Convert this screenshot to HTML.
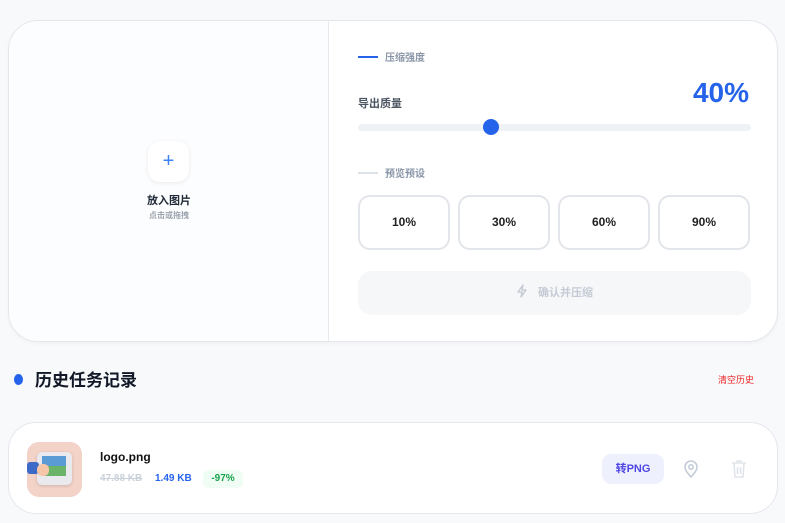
<!DOCTYPE html>
<html><head><meta charset="utf-8"><style>
*{box-sizing:border-box;margin:0;padding:0}
body{width:785px;height:523px;background:#f8f9fb;font-family:"Liberation Sans","Noto Sans CJK SC",sans-serif;position:relative;overflow:hidden}
.card{position:absolute;left:8px;top:20px;width:770px;height:322px;background:#fff;border:1px solid #e4e7ec;border-radius:30px;overflow:hidden;box-shadow:0 2px 4px rgba(0,0,0,.03)}
.left{position:absolute;left:0;top:0;width:320px;height:100%;background:#fcfdfe;border-right:1px solid #e6e9ee}
.plus{position:absolute;left:139px;top:120px;width:41px;height:41px;background:#fff;border-radius:12px;box-shadow:0 1px 4px rgba(0,0,0,.08);color:#3b82f6;font-size:20px;text-align:center;line-height:40px}
.t1{position:absolute;left:0;width:320px;text-align:center;top:171px;font-size:11px;font-weight:bold;color:#1f2937}
.t2{position:absolute;left:0;width:320px;text-align:center;top:189px;font-size:8px;color:#9ca3af;font-weight:bold}
.lbl{position:absolute;font-size:10px;color:#8a96a8;font-weight:bold}
.line{position:absolute;height:2px;width:20px}
.btn{position:absolute;top:174px;width:92px;height:55px;border:2px solid #e2e5ea;border-radius:12px;text-align:center;line-height:51px;font-size:12px;color:#222;font-weight:600}
</style></head><body>
<div class="card">
 <div class="left">
  <div class="plus">+</div>
  <div class="t1">放入图片</div>
  <div class="t2">点击或拖拽</div>
 </div>
 <div class="line" style="left:349px;top:35px;background:#2563eb"></div>
 <div class="lbl" style="left:376px;top:28px">压缩强度</div>
 <div style="position:absolute;left:349px;top:74px;font-size:11px;color:#4b5563;font-weight:bold">导出质量</div>
 <div style="position:absolute;right:28px;top:56px;font-size:28px;font-weight:bold;color:#2563eb">40%</div>
 <div style="position:absolute;left:349px;top:103px;width:393px;height:7px;border-radius:4px;background:#eef1f6"></div>
 <div style="position:absolute;left:474px;top:98px;width:16px;height:16px;border-radius:50%;background:#2563eb"></div>
 <div class="line" style="left:349px;top:151px;background:#dde2ea"></div>
 <div class="lbl" style="left:376px;top:144px">预览预设</div>
 <div class="btn" style="left:349px">10%</div>
 <div class="btn" style="left:449px">30%</div>
 <div class="btn" style="left:549px">60%</div>
 <div class="btn" style="left:649px">90%</div>
 <div style="position:absolute;left:349px;top:250px;width:393px;height:44px;background:#f6f7f9;border-radius:14px;text-align:center;line-height:44px;font-size:11px;color:#c5cbd5;font-weight:bold">
  <svg width="12" height="14" viewBox="0 0 12 14" style="vertical-align:-2px;margin-right:10px"><path d="M7 1L2 8h4l-1 5 5-7H6z" fill="none" stroke="#c5cbd5" stroke-width="1.4" stroke-linejoin="round"/></svg>确认并压缩</div>
</div>
<div style="position:absolute;left:14px;top:374px;width:9px;height:11px;border-radius:50%;background:#2563eb"></div>
<div style="position:absolute;left:35px;top:366px;font-size:17px;font-weight:bold;color:#111827">历史任务记录</div>
<div style="position:absolute;left:718px;top:373px;font-size:9px;color:#ef2020">清空历史</div>
<div style="position:absolute;left:8px;top:422px;width:770px;height:92px;background:#fff;border:1px solid #e4e7ec;border-radius:28px">
 <div style="position:absolute;left:18px;top:19px;width:55px;height:55px;border-radius:12px;background:#f3d2c8;overflow:hidden">
  <div style="position:absolute;left:10px;top:10px;width:35px;height:33px;border-radius:5px;background:#e9e9ee;box-shadow:0 1px 3px rgba(0,0,0,.15)"></div>
  <div style="position:absolute;left:15px;top:14px;width:24px;height:20px;background:linear-gradient(#5b9bd5 50%,#6cb36a 50%)"></div>
  <div style="position:absolute;left:0;top:20px;width:12px;height:12px;background:#3e6ac7;border-radius:3px"></div>
  <div style="position:absolute;left:10px;top:22px;width:12px;height:12px;background:#f5c6a8;border-radius:5px"></div>
 </div>
 <div style="position:absolute;left:91px;top:27px;font-size:12px;font-weight:bold;color:#111">logo.png</div>
 <div style="position:absolute;left:91px;top:50px;font-size:10px;font-weight:bold;color:#cbd2dc;text-decoration:line-through">47.88 KB</div>
 <div style="position:absolute;left:146px;top:50px;font-size:10px;font-weight:bold;color:#2563eb">1.49 KB</div>
 <div style="position:absolute;left:194px;top:47px;width:40px;height:18px;border-radius:6px;background:#f0fdf4;color:#16a34a;font-size:10px;font-weight:bold;text-align:center;line-height:18px">-97%</div>
 <div style="position:absolute;left:593px;top:31px;width:62px;height:30px;border-radius:9px;background:#eef1fd;color:#4f46e5;font-size:11px;font-weight:bold;text-align:center;line-height:30px">转PNG</div>
 <svg style="position:absolute;left:673px;top:36px" width="18" height="20" viewBox="0 0 18 20"><path d="M9 18c-3-3.5-6-6.5-6-10a6 6 0 0112 0c0 3.5-3 6.5-6 10z" fill="none" stroke="#c3ccd8" stroke-width="1.6"/><circle cx="9" cy="8" r="2.2" fill="none" stroke="#c3ccd8" stroke-width="1.6"/></svg>
 <svg style="position:absolute;left:722px;top:36px" width="16" height="20" viewBox="0 0 16 20"><path d="M1 4h14M6 4V2h4v2M3 4l1 14h8l1-14M6.5 8v7M9.5 8v7" fill="none" stroke="#e1e5ec" stroke-width="1.6"/></svg>
</div>
</body></html>
